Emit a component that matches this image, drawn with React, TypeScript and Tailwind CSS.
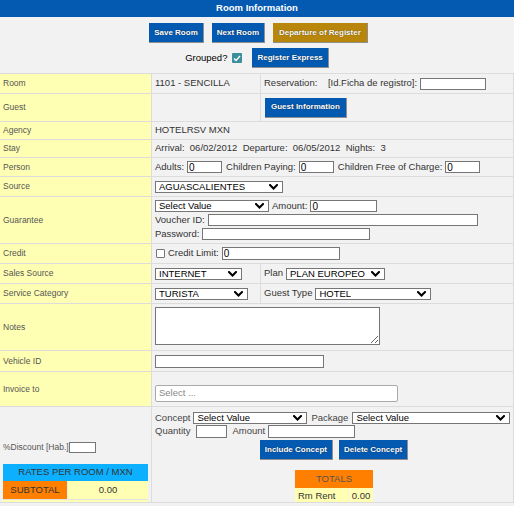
import React from "react";

// Small down chevron used inside the fake selects
function Chevron() {
  return (
    <svg width="9" height="6" viewBox="0 0 9 6" fill="none" className="shrink-0">
      <path d="M1 1l3.5 3.5L8 1" stroke="#000" strokeWidth="2" strokeLinecap="square" />
    </svg>
  );
}

function Select({ value, className = "" }: { value: string; className?: string }) {
  return (
    <div
      className={`flex h-[12px] shrink-0 items-center justify-between border border-[#767676] bg-white pl-[3px] pr-[4px] text-[9.5px] leading-none text-black ${className}`}
    >
      <span className="truncate">{value}</span>
      <Chevron />
    </div>
  );
}

function Field({ value = "", className = "" }: { value?: string; className?: string }) {
  return (
    <input
      readOnly
      value={value}
      className={`h-[12px] shrink-0 border border-[#767676] bg-white px-[1px] text-[10px] leading-none text-black outline-none ${className}`}
    />
  );
}

function Btn({ children, gold = false, className = "" }: { children: React.ReactNode; gold?: boolean; className?: string }) {
  return (
    <button
      className={`h-[20px] shrink-0 border-b border-r border-[#8f8f8f] px-[5px] text-[8px] font-bold leading-none text-white [text-shadow:0_0_1px_rgba(0,0,0,0.7)] ${gold ? "bg-[#b8860b]" : "bg-[#0459b0]"} ${className}`}
    >
      {children}
    </button>
  );
}

// One row of the form: yellow label column + value area
function Row({ label, h, children, labelBg = "bg-[#ffffb3]" }: { label: React.ReactNode; h: string; children?: React.ReactNode; labelBg?: string }) {
  return (
    <div className={`flex shrink-0 border-t border-[#dcdcdc] ${h}`}>
      <div className={`flex w-[151px] shrink-0 items-center pl-[3px] text-[8.5px] text-[#555] ${labelBg}`}>{label}</div>
      <div className="flex min-w-0 flex-1 border-l border-[#dcdcdc] text-[9.5px] text-[#333]">{children}</div>
    </div>
  );
}

export default function App() {
  return (
    <div className="h-[506px] w-full overflow-hidden bg-[#f2f2f2] font-['Liberation_Sans',Arial,sans-serif]">
      <div className="flex h-[17px] items-center justify-center bg-[#0459b0] text-[9.5px] font-bold text-white">
        Room Information
      </div>

      {/* action buttons */}
      <div className="flex h-[56px] flex-col items-center pt-[6px]">
        <div className="flex gap-[8px] pl-[3px]">
          <Btn>Save Room</Btn>
          <Btn>Next Room</Btn>
          <Btn gold className="px-[6px]">Departure of Register</Btn>
        </div>
        <div className="mt-[5px] flex items-center">
          <span className="text-[9.5px] text-black">Grouped?</span>
          <span className="ml-[5px] flex h-[10px] w-[10px] items-center justify-center rounded-[1px] bg-[#3b8e9c]">
            <svg width="8" height="7" viewBox="0 0 8 7" fill="none">
              <path d="M1 3.5l2 2L7 1" stroke="#fff" strokeWidth="1.4" />
            </svg>
          </span>
          <Btn className="ml-[10px] px-[4px]">Register Express</Btn>
        </div>
      </div>

      <div className="flex h-[430px] flex-col overflow-hidden border-r border-[#dcdcdc]">
        <Row label="Room" h="h-[20px]">
          <div className="flex w-[108px] shrink-0 items-center pl-[3px]">1101 - SENCILLA</div>
          <div className="flex flex-1 items-center border-l border-[#dcdcdc] pl-[3px] whitespace-pre">
            <span>Reservation:    [Id.Ficha de registro]:</span>
            <Field className="ml-[3px] w-[66px]" />
          </div>
        </Row>
        <Row label="Guest" h="h-[28px]">
          <div className="w-[108px] shrink-0" />
          <div className="flex flex-1 items-center border-l border-[#dcdcdc] pl-[4px]">
            <Btn className="px-[6px]">Guest Information</Btn>
          </div>
        </Row>
        <Row label="Agency" h="h-[18px]">
          <div className="flex items-center pl-[3px]">HOTELRSV MXN</div>
        </Row>
        <Row label="Stay" h="h-[18px]">
          <div className="flex items-center pl-[3px] whitespace-pre">
            Arrival:  06/02/2012  Departure:  06/05/2012  Nights:  3
          </div>
        </Row>
        <Row label="Person" h="h-[19px]">
          <div className="flex items-center gap-[3px] pl-[3px]">
            <span>Adults:</span>
            <Field value="0" className="w-[35px]" />
            <span className="ml-[1px]">Children Paying:</span>
            <Field value="0" className="w-[35px]" />
            <span className="ml-[1px]">Children Free of Charge:</span>
            <Field value="0" className="w-[35px]" />
          </div>
        </Row>
        <Row label="Source" h="h-[20px]">
          <div className="flex items-center pl-[3px]">
            <Select value="AGUASCALIENTES" className="w-[128px]" />
          </div>
        </Row>
        <Row label="Guarantee" h="h-[47px]">
          <div className="flex flex-col justify-center gap-[2px] pl-[3px]">
            <div className="flex h-[12px] items-center gap-[3px]">
              <Select value="Select Value" className="w-[114px]" />
              <span>Amount:</span>
              <Field value="0" className="w-[67px]" />
            </div>
            <div className="flex h-[12px] items-center gap-[3px]">
              <span>Voucher ID:</span>
              <Field className="w-[270px]" />
            </div>
            <div className="flex h-[12px] items-center gap-[3px]">
              <span>Password:</span>
              <Field className="w-[168px]" />
            </div>
          </div>
        </Row>
        <Row label="Credit" h="h-[20px]">
          <div className="flex items-center pl-[4px]">
            <span className="h-[9px] w-[9px] rounded-[1px] border border-[#767676] bg-white" />
            <span className="ml-[3px]">Credit Limit:</span>
            <Field value="0" className="ml-[3px] h-[13px] w-[118px]" />
          </div>
        </Row>
        <Row label="Sales Source" h="h-[20px]">
          <div className="flex w-[108px] shrink-0 items-center pl-[3px]">
            <Select value="INTERNET" className="w-[87px]" />
          </div>
          <div className="flex flex-1 items-center gap-[3px] border-l border-[#dcdcdc] pl-[3px]">
            <span>Plan</span>
            <Select value="PLAN EUROPEO" className="w-[99px]" />
          </div>
        </Row>
        <Row label="Service Category" h="h-[20px]">
          <div className="flex w-[108px] shrink-0 items-center pl-[3px]">
            <Select value="TURISTA" className="w-[93px]" />
          </div>
          <div className="flex flex-1 items-center gap-[3px] border-l border-[#dcdcdc] pl-[3px]">
            <span>Guest Type</span>
            <Select value="HOTEL" className="w-[116px]" />
          </div>
        </Row>
        <Row label="Notes" h="h-[47px]">
          <div className="flex items-start pl-[3px] pt-[3px]">
            <textarea readOnly className="h-[38px] w-[225px] border border-[#767676] bg-white outline-none" />
          </div>
        </Row>
        <Row label="Vehicle ID" h="h-[21px]">
          <div className="flex items-center pl-[3px]">
            <Field className="h-[13px] w-[169px]" />
          </div>
        </Row>
        <Row label="Invoice to" h="h-[35px]">
          <div className="flex flex-col justify-end pb-[4px] pl-[3px]">
            <div className="flex h-[17px] w-[243px] items-center rounded-[2px] border border-[#aaa] bg-white pl-[3px] text-[9.5px] text-[#888]">
              Select ...
            </div>
          </div>
        </Row>

        {/* discount + concepts + totals */}
        <div className="flex h-[97px] shrink-0 overflow-hidden border-y border-[#dcdcdc]">
          <div className="flex w-[151px] shrink-0 flex-col px-[3px] pt-[35px] text-[8.5px] text-[#555]">
            <div className="flex h-[11px] shrink-0 items-center">
              <span>%Discount [Hab.]</span>
              <span className="h-[11px] w-[27px] border border-[#767676] bg-white" />
            </div>
            <div className="mt-[11px] flex h-[17px] shrink-0 items-center justify-center bg-[#0db0ff] text-[9.5px] text-[#333]">
              RATES PER ROOM / MXN
            </div>
            <div className="flex h-[19px] shrink-0 gap-[1px] border-b border-[#e2e2e2] text-[9.5px] text-[#333]">
              <div className="flex w-[64px] items-center justify-center bg-[#ff7f00]">SUBTOTAL</div>
              <div className="flex flex-1 items-center justify-center bg-[#ffffb3]">0.00</div>
            </div>
            <div className="flex h-[18px] shrink-0 gap-[1px]">
              <div className="w-[64px] bg-[#ffffb3]" />
              <div className="flex-1 bg-[#ffffb3]" />
            </div>
          </div>

          <div className="flex flex-1 flex-col border-l border-[#dcdcdc] pl-[3px] pt-[5px] text-[9.5px] text-[#444]">
            <div className="flex h-[12px] shrink-0 items-center">
              <span>Concept</span>
              <Select value="Select Value" className="ml-[3px] w-[114px]" />
              <span className="ml-[4px]">Package</span>
              <Select value="Select Value" className="ml-[4px] w-[158px]" />
            </div>
            <div className="mt-[1px] flex h-[13px] shrink-0 items-center">
              <span>Quantity</span>
              <Field className="ml-[6px] h-[13px] w-[31px]" />
              <span className="ml-[5px]">Amount</span>
              <Field className="ml-[3px] h-[13px] w-[87px]" />
            </div>
            <div className="mt-[2px] flex shrink-0 justify-center gap-[6px]">
              <Btn>Include Concept</Btn>
              <Btn>Delete Concept</Btn>
            </div>
            <div className="mt-[10px] flex shrink-0 justify-center">
              <div className="flex w-[78px] flex-col">
                <div className="flex h-[18px] shrink-0 items-center justify-center bg-[#ff7f00] text-[9.5px] text-[#555]">TOTALS</div>
                <div className="flex h-[16px] shrink-0 gap-[1px] text-[9.5px] text-[#333]">
                  <div className="flex w-[53px] items-center bg-[#ffffb3] pl-[3px]">Rm Rent</div>
                  <div className="flex flex-1 items-center justify-center bg-[#ffffb3]">0.00</div>
                </div>
              </div>
            </div>
          </div>
        </div>
      </div>
    </div>
  );
}
